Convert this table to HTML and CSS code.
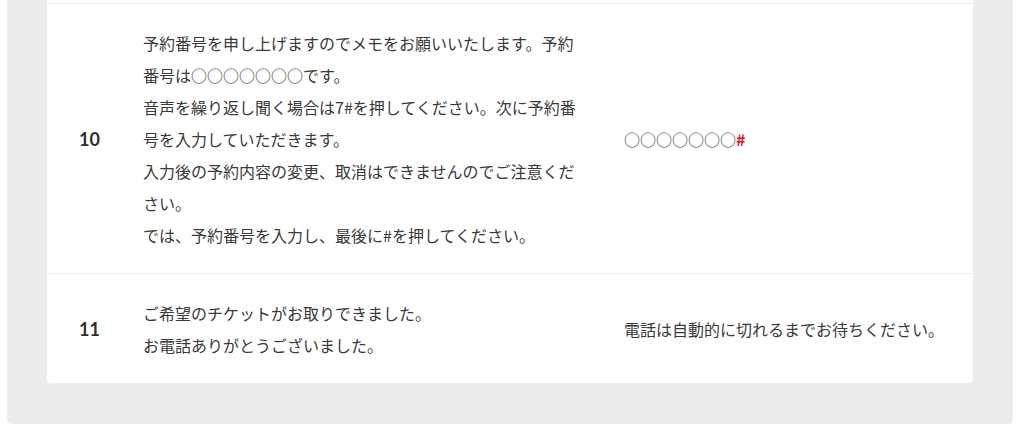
FILE: index.html
```html
<!DOCTYPE html>
<html lang="ja">
<head>
<meta charset="utf-8">
<title>予約フロー</title>
<link rel="stylesheet" href="styles.css">
</head>
<body>
<div class="wrap">
  <div class="card">
    <div class="row">
      <div class="num">10</div>
      <div class="voice">
        <p>予約番号を申し上げますのでメモをお願いいたします。予約番号は○○○○○○○です。</p>
        <p>音声を繰り返し聞く場合は7#を押してください。次に予約番号を入力していただきます。</p>
        <p>入力後の予約内容の変更、取消はできませんのでご注意ください。</p>
        <p>では、予約番号を入力し、最後に#を押してください。</p>
      </div>
      <div class="action">○○○○○○○<span class="hash">#</span></div>
    </div>
    <div class="row">
      <div class="num">11</div>
      <div class="voice">
        <p>ご希望のチケットがお取りできました。</p>
        <p>お電話ありがとうございました。</p>
      </div>
      <div class="action">電話は自動的に切れるまでお待ちください。</div>
    </div>
  </div>
</div>
</body>
</html>
```

FILE: styles.css
```css
* { box-sizing: border-box; }
html, body { margin: 0; padding: 0; background: #fff; }
body {
  font-family: "Noto Sans CJK JP", "Noto Sans", sans-serif;
  color: #3a3a3a;
  font-size: 16px;
}
.wrap {
  margin-left: 7px;
  width: 1006px;
  background: #ececec;
  padding: 0 40px 41px;
  border-radius: 0 0 5px 5px;
}
.card {
  background: #fff;
  padding-top: 3px;
  border-radius: 0 0 4px 4px;
}
.row {
  display: grid;
  grid-template-columns: 85px 451px 1fr;
  align-items: center;
  border-top: 1px solid #ececec;
  padding: 23px 0 22px;
}
.num {
  text-align: center;
  font-family: "Lato", "Noto Sans", sans-serif;
  font-weight: 700;
  font-size: 18px;
  color: #2e2e2e;
}
.voice {
  padding-left: 11px;
  line-height: 32px;
}
.voice p { margin: 0; }
.action {
  padding-left: 41px;
  line-height: 32px;
}
.hash {
  color: #e0141e;
  font-weight: 700;
}
```
